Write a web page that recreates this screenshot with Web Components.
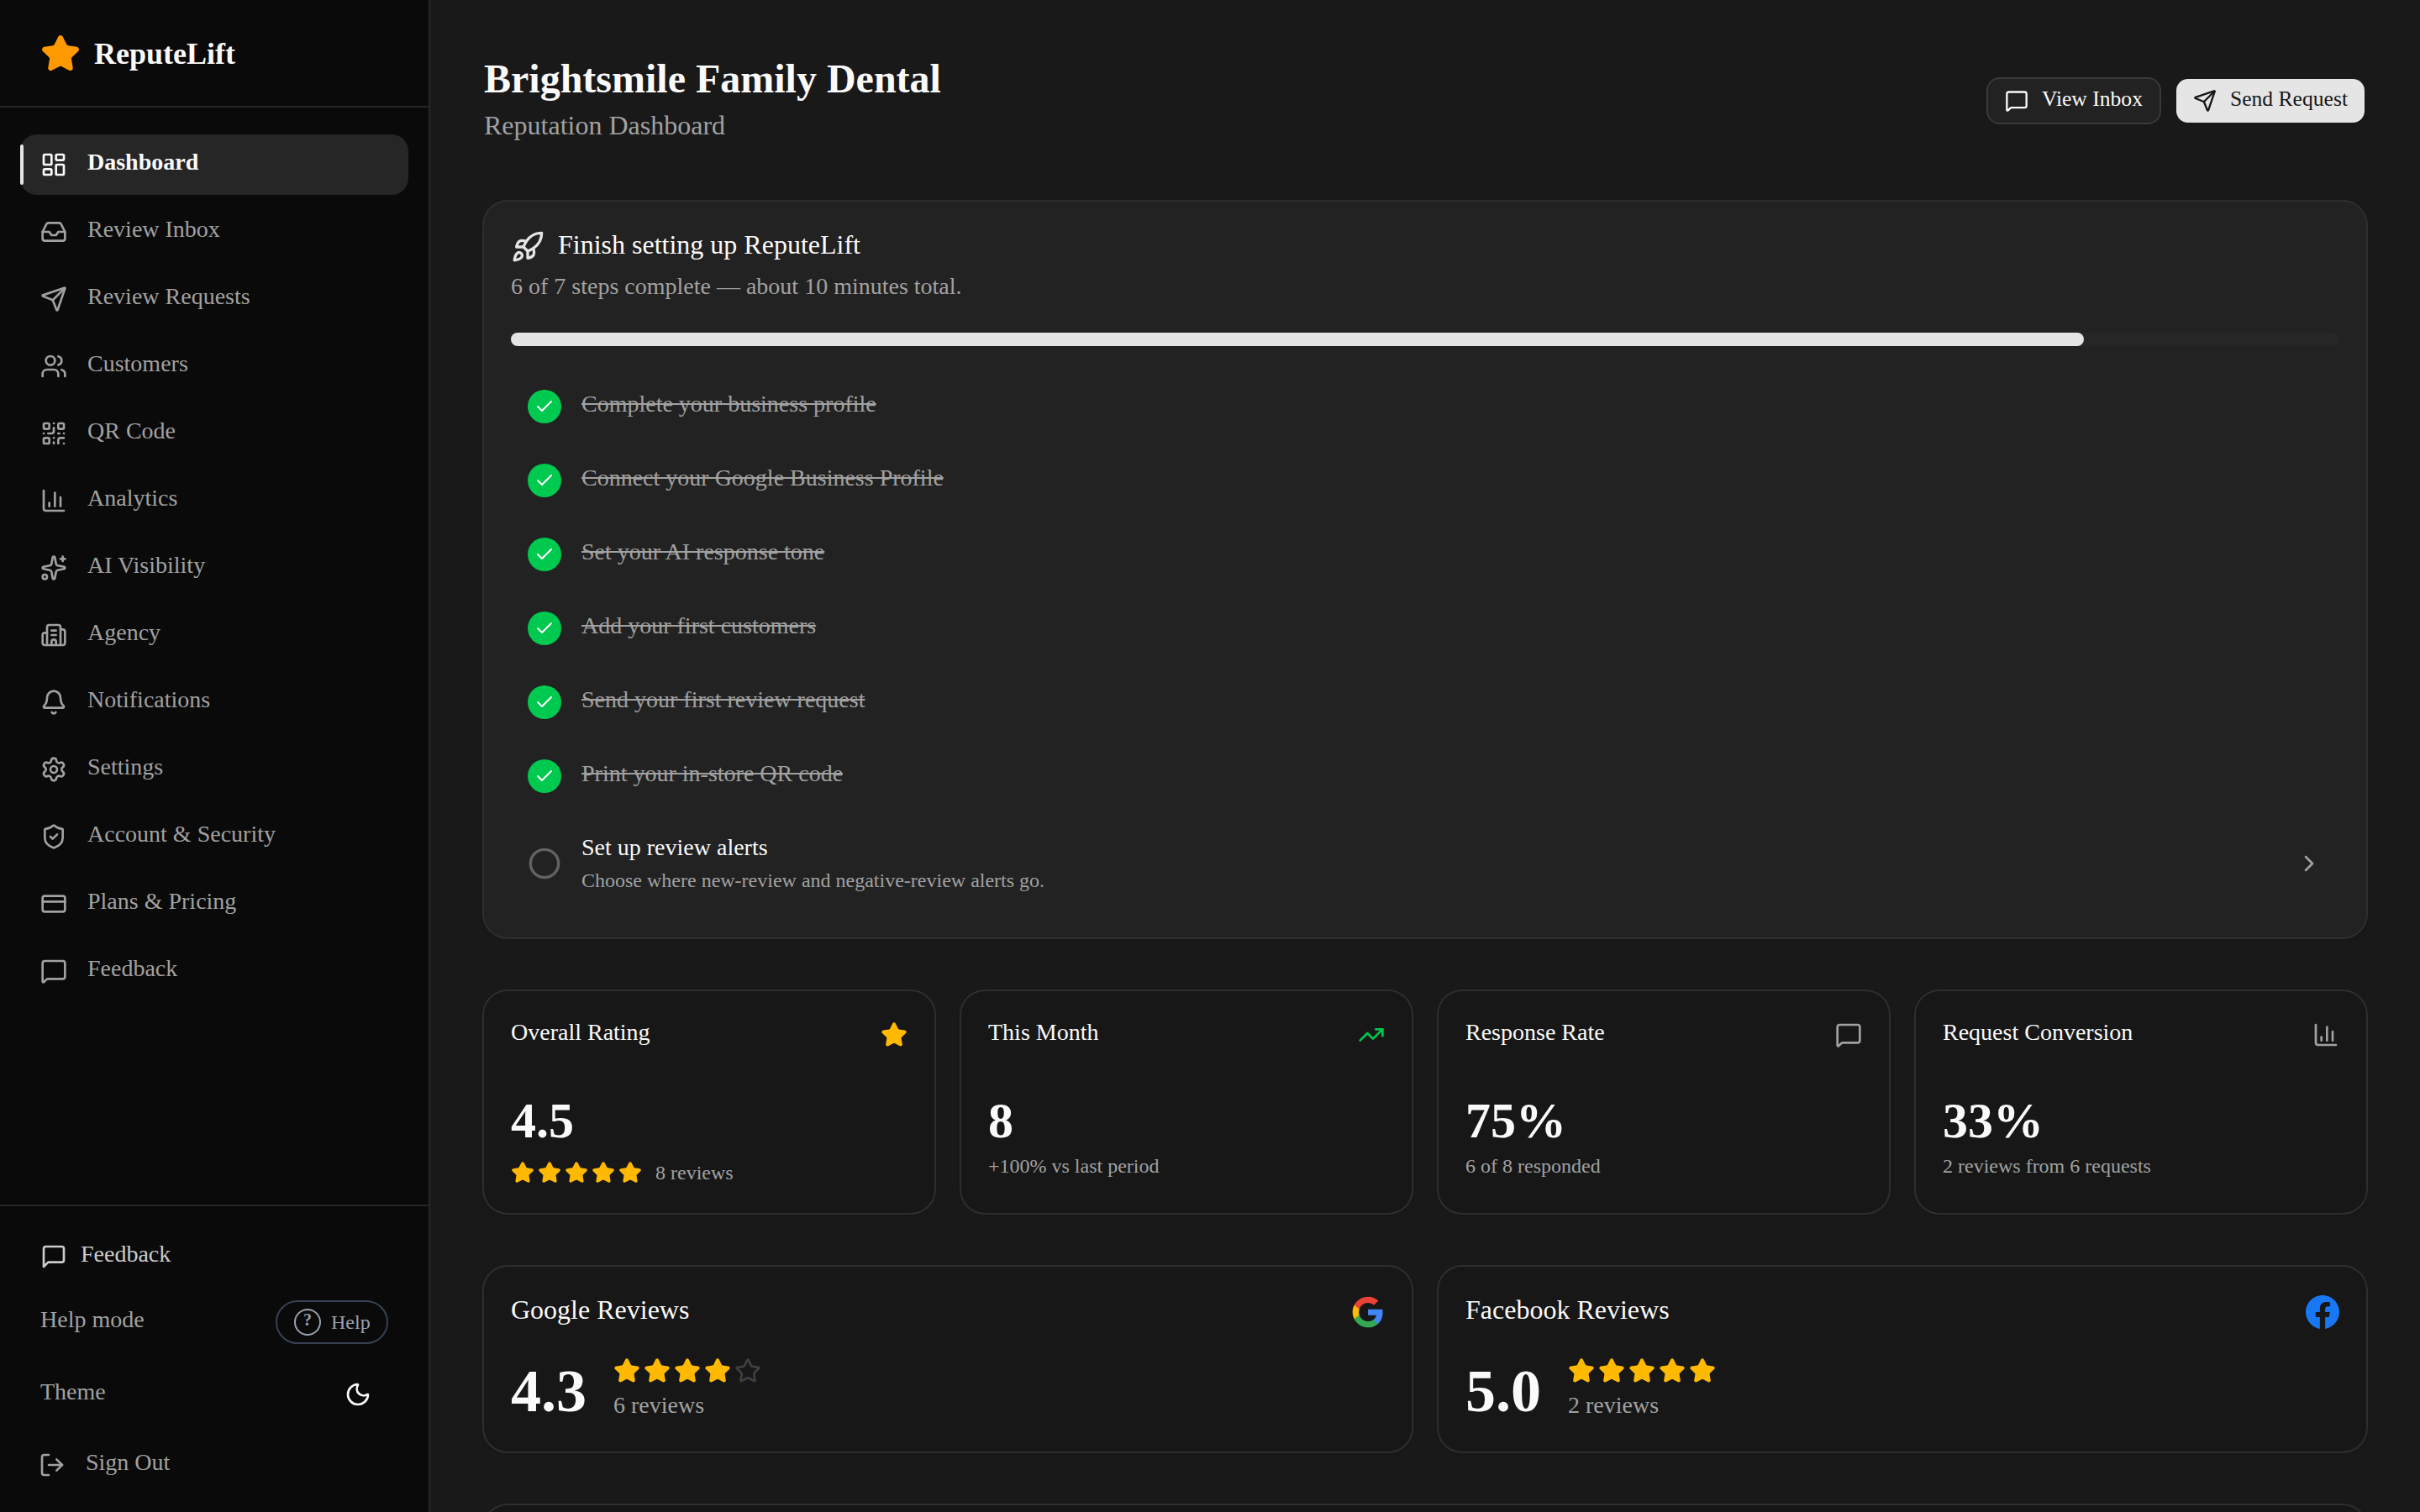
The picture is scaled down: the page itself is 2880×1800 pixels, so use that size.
<!DOCTYPE html>
<html lang="en">
<head>
<meta charset="utf-8">
<title>ReputeLift</title>
<style>
	:root {
		--page:    #191919;
		--sidebar: #0a0a0a;
		--card:    #171717;
		--raised:  #222222;
		--muted:   #262626;
		--line:    #2e2e2e;
		--text:    #fafafa;
		--dim:     #a1a1a1;
		--primary: #e5e5e5;
		--green:   #00c950;
		--amber:   #ffb900;
	}

	body {
		margin:      0;
		height:      1800px;
		overflow:    hidden;
		background:  var( --page );
		color:       var( --text );
		font-family: "Liberation Serif", "Times New Roman", serif;
		font-size:   28px;
	}
</style>
</head>
<body>

<rl-app>
	<rl-sidebar slot="sidebar">
		<rl-nav-item icon="dashboard" active>Dashboard</rl-nav-item>
		<rl-nav-item icon="inbox">Review Inbox</rl-nav-item>
		<rl-nav-item icon="send">Review Requests</rl-nav-item>
		<rl-nav-item icon="users">Customers</rl-nav-item>
		<rl-nav-item icon="qr">QR Code</rl-nav-item>
		<rl-nav-item icon="chart">Analytics</rl-nav-item>
		<rl-nav-item icon="sparkles">AI Visibility</rl-nav-item>
		<rl-nav-item icon="building">Agency</rl-nav-item>
		<rl-nav-item icon="bell">Notifications</rl-nav-item>
		<rl-nav-item icon="settings">Settings</rl-nav-item>
		<rl-nav-item icon="shield">Account &amp; Security</rl-nav-item>
		<rl-nav-item icon="card">Plans &amp; Pricing</rl-nav-item>
		<rl-nav-item icon="message">Feedback</rl-nav-item>
	</rl-sidebar>

	<rl-page-header>
		<span slot="title">Brightsmile Family Dental</span>
		<span slot="subtitle">Reputation Dashboard</span>
		<rl-button slot="actions" icon="message">View Inbox</rl-button>
		<rl-button slot="actions" icon="send" primary>Send Request</rl-button>
	</rl-page-header>

	<rl-setup-card progress="86.03">
		<span slot="title">Finish setting up ReputeLift</span>
		<span slot="subtitle">6 of 7 steps complete — about 10 minutes total.</span>
		<rl-step done>Complete your business profile</rl-step>
		<rl-step done>Connect your Google Business Profile</rl-step>
		<rl-step done>Set your AI response tone</rl-step>
		<rl-step done>Add your first customers</rl-step>
		<rl-step done>Send your first review request</rl-step>
		<rl-step done>Print your in-store QR code</rl-step>
		<rl-step hint="Choose where new-review and negative-review alerts go.">Set up review alerts</rl-step>
	</rl-setup-card>

	<rl-grid columns="4">
		<rl-stat label="Overall Rating" icon="star" tone="amber" value="4.5" rating="5">8 reviews</rl-stat>
		<rl-stat label="This Month" icon="trend" tone="green" value="8">+100% vs last period</rl-stat>
		<rl-stat label="Response Rate" icon="message" value="75%">6 of 8 responded</rl-stat>
		<rl-stat label="Request Conversion" icon="chart" value="33%">2 reviews from 6 requests</rl-stat>
	</rl-grid>

	<rl-grid columns="2">
		<rl-source label="Google Reviews" icon="google" value="4.3" rating="4">6 reviews</rl-source>
		<rl-source label="Facebook Reviews" icon="facebook" value="5.0" rating="5">2 reviews</rl-source>
	</rl-grid>

	<rl-panel></rl-panel>
</rl-app>

<script>
(function ()
{
	const STAR = '<path d="M11.525 2.295a.53.53 0 0 1 .95 0l2.31 4.679a2.123 2.123 0 0 0 1.595 1.16l5.166.756a.53.53 0 0 1 .294.904l-3.736 3.638a2.123 2.123 0 0 0-.611 1.878l.882 5.14a.53.53 0 0 1-.771.56l-4.618-2.428a2.122 2.122 0 0 0-1.973 0L6.396 21.01a.53.53 0 0 1-.77-.56l.881-5.139a2.122 2.122 0 0 0-.611-1.879L2.16 9.795a.53.53 0 0 1 .294-.906l5.165-.755a2.122 2.122 0 0 0 1.597-1.16z"/>';

	const ICONS =
	{
		dashboard: '<rect width="7" height="9" x="3" y="3" rx="1"/><rect width="7" height="5" x="14" y="3" rx="1"/><rect width="7" height="9" x="14" y="12" rx="1"/><rect width="7" height="5" x="3" y="16" rx="1"/>',
		inbox:     '<path d="M22 12h-6l-2 3h-4l-2-3H2"/><path d="M5.45 5.11 2 12v6a2 2 0 0 0 2 2h16a2 2 0 0 0 2-2v-6l-3.45-6.89A2 2 0 0 0 16.76 4H7.24a2 2 0 0 0-1.79 1.11z"/>',
		send:      '<path d="M14.536 21.686a.5.5 0 0 0 .937-.024l6.5-19a.496.496 0 0 0-.635-.635l-19 6.5a.5.5 0 0 0-.024.937l7.93 3.18a2 2 0 0 1 1.112 1.11z"/><path d="m21.854 2.147-10.94 10.939"/>',
		users:     '<path d="M16 21v-2a4 4 0 0 0-4-4H6a4 4 0 0 0-4 4v2"/><path d="M16 3.128a4 4 0 0 1 0 7.744"/><path d="M22 21v-2a4 4 0 0 0-3-3.87"/><circle cx="9" cy="7" r="4"/>',
		qr:        '<rect width="5" height="5" x="3" y="3" rx="1"/><rect width="5" height="5" x="16" y="3" rx="1"/><rect width="5" height="5" x="3" y="16" rx="1"/><path d="M21 16h-3a2 2 0 0 0-2 2v3"/><path d="M21 21v.01"/><path d="M12 7v3a2 2 0 0 1-2 2H7"/><path d="M3 12h.01"/><path d="M12 3h.01"/><path d="M12 16v.01"/><path d="M16 12h1"/><path d="M21 12v.01"/><path d="M12 21v-1"/>',
		chart:     '<path d="M3 3v16a2 2 0 0 0 2 2h16"/><path d="M18 17V9"/><path d="M13 17V5"/><path d="M8 17v-3"/>',
		sparkles:  '<path d="M11.017 2.814a1 1 0 0 1 1.966 0l1.051 5.558a2 2 0 0 0 1.594 1.594l5.558 1.051a1 1 0 0 1 0 1.966l-5.558 1.051a2 2 0 0 0-1.594 1.594l-1.051 5.558a1 1 0 0 1-1.966 0l-1.051-5.558a2 2 0 0 0-1.594-1.594l-5.558-1.051a1 1 0 0 1 0-1.966l5.558-1.051a2 2 0 0 0 1.594-1.594z"/><path d="M20 2v4"/><path d="M22 4h-4"/><circle cx="4" cy="20" r="2"/>',
		building:  '<path d="M10 12h4"/><path d="M10 8h4"/><path d="M14 21v-3a2 2 0 0 0-4 0v3"/><path d="M6 10H4a2 2 0 0 0-2 2v7a2 2 0 0 0 2 2h16a2 2 0 0 0 2-2V9a2 2 0 0 0-2-2h-2"/><path d="M6 21V5a2 2 0 0 1 2-2h8a2 2 0 0 1 2 2v16"/>',
		bell:      '<path d="M10.268 21a2 2 0 0 0 3.464 0"/><path d="M3.262 15.326A1 1 0 0 0 4 17h16a1 1 0 0 0 .74-1.673C19.41 13.956 18 12.499 18 8A6 6 0 0 0 6 8c0 4.499-1.411 5.956-2.738 7.326"/>',
		settings:  '<path d="M9.671 4.136a2.34 2.34 0 0 1 4.659 0 2.34 2.34 0 0 0 3.319 1.915 2.34 2.34 0 0 1 2.33 4.033 2.34 2.34 0 0 0 0 3.831 2.34 2.34 0 0 1-2.33 4.033 2.34 2.34 0 0 0-3.319 1.915 2.34 2.34 0 0 1-4.659 0 2.34 2.34 0 0 0-3.32-1.915 2.34 2.34 0 0 1-2.33-4.033 2.34 2.34 0 0 0 0-3.831A2.34 2.34 0 0 1 6.35 6.051a2.34 2.34 0 0 0 3.319-1.915"/><circle cx="12" cy="12" r="3"/>',
		shield:    '<path d="M20 13c0 5-3.5 7.5-7.66 8.95a1 1 0 0 1-.67-.01C7.5 20.5 4 18 4 13V6a1 1 0 0 1 1-1c2 0 4.5-1.2 6.24-2.72a1.17 1.17 0 0 1 1.52 0C14.51 3.81 17 5 19 5a1 1 0 0 1 1 1z"/><path d="m9 12 2 2 4-4"/>',
		card:      '<rect width="20" height="14" x="2" y="5" rx="2"/><path d="M2 10h20"/>',
		message:   '<path d="M22 17a2 2 0 0 1-2 2H6.828a2 2 0 0 0-1.414.586l-2.202 2.202A.71.71 0 0 1 2 21.286V5a2 2 0 0 1 2-2h16a2 2 0 0 1 2 2z"/>',
		feedback:  '<path d="M21 15a2 2 0 0 1-2 2H7l-4 4V5a2 2 0 0 1 2-2h14a2 2 0 0 1 2 2z"/>',
		moon:      '<path d="M20.985 12.486a9 9 0 1 1-9.473-9.472c.405-.022.617.46.402.803a6 6 0 0 0 8.268 8.268c.344-.215.825-.004.803.401"/>',
		logout:    '<path d="m16 17 5-5-5-5"/><path d="M21 12H9"/><path d="M9 21H5a2 2 0 0 1-2-2V5a2 2 0 0 1 2-2h4"/>',
		rocket:    '<path d="M4.5 16.5c-1.5 1.26-2 5-2 5s3.74-.5 5-2c.71-.84.7-2.13-.09-2.91a2.18 2.18 0 0 0-2.91-.09z"/><path d="m12 15-3-3a22 22 0 0 1 2-3.95A12.88 12.88 0 0 1 22 2c0 2.72-.78 7.5-6 11a22.35 22.35 0 0 1-4 2z"/><path d="M9 12H4s.55-3.03 2-4c1.62-1.08 5 0 5 0"/><path d="M12 15v5s3.03-.55 4-2c1.08-1.62 0-5 0-5"/>',
		check:     '<path d="M20 6 9 17l-5-5"/>',
		circle:    '<circle cx="12" cy="12" r="10"/>',
		chevron:   '<path d="m9 18 6-6-6-6"/>',
		trend:     '<path d="M16 7h6v6"/><path d="m22 7-8.5 8.5-5-5L2 17"/>',
		star:      `<g fill="currentColor">${ STAR }</g>`,
		starEmpty: STAR,
		google:    '<g stroke="none"><path fill="#4285F4" d="M22.56 12.25c0-.78-.07-1.53-.2-2.25H12v4.26h5.92c-.26 1.37-1.04 2.53-2.21 3.31v2.77h3.57c2.08-1.92 3.28-4.74 3.28-8.09z"/><path fill="#34A853" d="M12 23c2.97 0 5.46-.98 7.28-2.66l-3.57-2.77c-.98.66-2.23 1.06-3.71 1.06-2.86 0-5.29-1.93-6.16-4.53H2.18v2.84C3.99 20.53 7.7 23 12 23z"/><path fill="#FBBC05" d="M5.84 14.09c-.22-.66-.35-1.36-.35-2.09s.13-1.43.35-2.09V7.07H2.18C1.43 8.55 1 10.22 1 12s.43 3.45 1.18 4.93l2.85-2.22.81-.62z"/><path fill="#EA4335" d="M12 5.38c1.62 0 3.06.56 4.21 1.64l3.15-3.15C17.45 2.09 14.97 1 12 1 7.7 1 3.99 3.47 2.18 7.07l3.66 2.84c.87-2.6 3.3-4.53 6.16-4.53z"/></g>',
		facebook:  '<path stroke="none" fill="#1877F2" d="M24 12.073c0-6.627-5.373-12-12-12s-12 5.373-12 12c0 5.99 4.388 10.954 10.125 11.854v-8.385H7.078v-3.47h3.047V9.43c0-3.007 1.792-4.669 4.533-4.669 1.312 0 2.686.235 2.686.235v2.953H15.83c-1.491 0-1.956.925-1.956 1.874v2.25h3.328l-.532 3.47h-2.796v8.385C19.612 23.027 24 18.062 24 12.073z"/>',
	};

	// text sits a little above the middle of its line
	const TEXT =
	`
		.sm { font-size: 28px; line-height: 33px; padding-bottom: 7px; }
		.md { font-size: 32px; line-height: 38px; padding-bottom: 6px; }
		.xs { font-size: 24px; line-height: 32px; }
	`;

	const CARD =
	`
		:host {
			display:        flex;
			flex-direction: column;
			box-sizing:     border-box;
			padding:        32px;
			border-radius:  28px;
			background:     var( --card );
			box-shadow:     0 0 0 2px var( --line ), 0 2px 6px rgba( 0, 0, 0, 0.1 ), 0 2px 4px -2px rgba( 0, 0, 0, 0.1 );
		}
	`;

	class Base extends HTMLElement
	{
		constructor()
		{
			super();

			this.attachShadow({ mode: 'open' });
		}

		connectedCallback()
		{
			this.shadowRoot.innerHTML = `<style>${ this.styles() }</style>${ this.markup() }`;
		}

		attr( name )
		{
			return this.getAttribute( name );
		}
	}

	class Icon extends Base
	{
		styles()
		{
			const size = this.attr( 'size' ) || 32;

			return `
				:host { display: block; flex: none; width: ${ size }px; height: ${ size }px; }
				svg   { display: block; width: 100%; height: 100%; }
			`;
		}

		markup()
		{
			return `<svg viewBox="0 0 24 24" fill="none" stroke="currentColor" stroke-width="2" stroke-linecap="round" stroke-linejoin="round">${ ICONS[ this.attr( 'name' )] }</svg>`;
		}
	}

	class Stars extends Base
	{
		styles()
		{
			return `
				:host  { display: flex; gap: 4px; color: var( --amber ); }
				.empty { color: #404040; }
			`;
		}

		markup()
		{
			const size = this.attr( 'size' );
			let html = '';

			for ( let i = 0; i < 5; i++ )
			{
				html += i < this.attr( 'rating' )
					? `<rl-icon name="star" size="${ size }"></rl-icon>`
					: `<rl-icon class="empty" name="starEmpty" size="${ size }"></rl-icon>`;
			}

			return html;
		}
	}

	class App extends Base
	{
		styles()
		{
			return `
				:host { display: flex; height: 1800px; overflow: hidden; }
				main {
					flex:           1;
					display:        flex;
					flex-direction: column;
					gap:            64px;
					padding:        64px;
				}
				main ::slotted( * ) { flex: none; }
			`;
		}

		markup()
		{
			return `<slot name="sidebar"></slot><main><slot></slot></main>`;
		}
	}

	class Sidebar extends Base
	{
		styles()
		{
			return `
				${ TEXT }
				:host {
					display:        flex;
					flex-direction: column;
					flex:           none;
					box-sizing:     border-box;
					width:          512px;
					border-right:   2px solid #262626;
					background:     var( --sidebar );
					color:          var( --dim );
				}
				header {
					display:       flex;
					align-items:   center;
					gap:           16px;
					box-sizing:    border-box;
					height:        128px;
					padding:       2px 48px 0;
					border-bottom: 2px solid #262626;
				}
				header rl-icon { color: #fe9a00; }
				.brand {
					color:       var( --text );
					font-size:   36px;
					font-weight: 700;
					line-height: 40px;
				}
				nav {
					flex:           1;
					display:        flex;
					flex-direction: column;
					gap:            8px;
					padding:        32px 24px;
				}
				footer {
					box-sizing: border-box;
					height:     366px;
					padding:    24px 48px 0;
					border-top: 2px solid #262626;
				}
				.row {
					display:         flex;
					align-items:     center;
					justify-content: space-between;
					height:          72px;
				}
				.feedback { justify-content: flex-start; gap: 16px; color: #cccccc; }
				.help     { height: 52px; margin-top: 16px; }
				.theme    { margin-top: 24px; }
				.signout  { justify-content: flex-start; gap: 24px; margin: 12px 0 0 -2px; }
				.pill {
					display:       flex;
					align-items:   center;
					gap:           12px;
					box-sizing:    border-box;
					width:         134px;
					height:        52px;
					padding:       0 20px;
					border:        2px solid #364153;
					border-radius: 26px;
					color:         #99a1af;
				}
				.mark {
					display:         flex;
					align-items:     center;
					justify-content: center;
					flex:            none;
					box-sizing:      border-box;
					width:           32px;
					height:          32px;
					border:          2px solid currentColor;
					border-radius:   50%;
				}
				.mark span {
					font-size:      20px;
					font-weight:    700;
					line-height:    22px;
					padding-bottom: 6px;
				}
				.toggle {
					display:         flex;
					align-items:     center;
					justify-content: center;
					width:           72px;
					height:          72px;
					color:           var( --text );
				}
			`;
		}

		markup()
		{
			return `
				<header><rl-icon name="star" size="48"></rl-icon><span class="brand">ReputeLift</span></header>
				<nav><slot></slot></nav>
				<footer>
					<div class="row feedback"><rl-icon name="feedback"></rl-icon><span class="sm">Feedback</span></div>
					<div class="row help">
						<span class="sm">Help mode</span>
						<div class="pill"><div class="mark"><span>?</span></div><div class="xs">Help</div></div>
					</div>
					<div class="row theme">
						<span class="sm">Theme</span>
						<div class="toggle"><rl-icon name="moon"></rl-icon></div>
					</div>
					<div class="row signout"><rl-icon name="logout"></rl-icon><span class="sm">Sign Out</span></div>
				</footer>
			`;
		}
	}

	class NavItem extends Base
	{
		styles()
		{
			return `
				${ TEXT }
				:host {
					position:      relative;
					display:       flex;
					align-items:   center;
					gap:           24px;
					height:        72px;
					padding:       0 24px;
					border-radius: 20px;
				}
				:host( [active] ) {
					background:  var( --muted );
					color:       var( --text );
					font-weight: 700;
				}
				:host( [active] )::before {
					content:       "";
					position:      absolute;
					left:          0;
					top:           12px;
					width:         4px;
					height:        48px;
					border-radius: 2px;
					background:    var( --primary );
				}
			`;
		}

		markup()
		{
			return `<rl-icon name="${ this.attr( 'icon' ) }"></rl-icon><span class="sm"><slot></slot></span>`;
		}
	}

	class PageHeader extends Base
	{
		styles()
		{
			return `
				:host {
					display:         flex;
					align-items:     center;
					justify-content: space-between;
					height:          112px;
				}
				.text     { align-self: flex-start; }
				h1        { margin: 0; font-size: 48px; line-height: 59px; }
				p         { margin: 0; font-size: 32px; line-height: 52px; color: var( --dim ); }
				.actions  { display: flex; gap: 16px; }
			`;
		}

		markup()
		{
			return `
				<div class="text">
					<h1><slot name="title"></slot></h1>
					<p><slot name="subtitle"></slot></p>
				</div>
				<div class="actions"><slot name="actions"></slot></div>
			`;
		}
	}

	class Button extends Base
	{
		styles()
		{
			return `
				:host {
					display:         flex;
					align-items:     center;
					gap:             16px;
					box-sizing:      border-box;
					height:          56px;
					padding:         0 20px;
					border:          2px solid #3a3a3a;
					border-radius:   16px;
					background:      var( --raised );
					background-clip: padding-box;
				}
				:host( [primary] ) {
					border-color:     transparent;
					background-color: var( --primary );
					color:            #171717;
				}
				span { font-size: 25.6px; line-height: 31px; padding-bottom: 5px; }
			`;
		}

		markup()
		{
			return `<rl-icon name="${ this.attr( 'icon' ) }" size="28"></rl-icon><span><slot></slot></span>`;
		}
	}

	class SetupCard extends Base
	{
		styles()
		{
			return `
				${ CARD }
				${ TEXT }
				:host         { background: var( --raised ); }
				.head         { display: flex; align-items: center; gap: 16px; }
				.head rl-icon { color: var( --primary ); }
				.sub          { margin-top: 8px; color: var( --dim ); }
				.track {
					height:        16px;
					margin:        32px 0;
					border-radius: 8px;
					background:    var( --muted );
				}
				.fill {
					width:         ${ this.attr( 'progress' ) }%;
					height:        100%;
					border-radius: 8px;
					background:    var( --primary );
				}
				.steps { display: flex; flex-direction: column; gap: 8px; }
			`;
		}

		markup()
		{
			return `
				<div class="head"><rl-icon name="rocket" size="40"></rl-icon><span class="md"><slot name="title"></slot></span></div>
				<div class="sub sm"><slot name="subtitle"></slot></div>
				<div class="track"><div class="fill"></div></div>
				<div class="steps"><slot></slot></div>
			`;
		}
	}

	class Step extends Base
	{
		styles()
		{
			return `
				${ TEXT }
				:host {
					display:     flex;
					align-items: center;
					gap:         24px;
					height:      112px;
					padding:     0 20px;
				}
				:host( [done] ) { height: 80px; color: var( --dim ); }
				.badge {
					display:         flex;
					align-items:     center;
					justify-content: center;
					width:           40px;
					height:          40px;
					border-radius:   50%;
					background:      var( --green );
					color:           #ffffff;
				}
				.done    { text-decoration: line-through; }
				.open    { color: #626262; }
				.body    { flex: 1; }
				.name    { line-height: 33px; }
				.hint    { margin-top: 7px; color: var( --dim ); }
				.chevron { color: var( --dim ); }
			`;
		}

		markup()
		{
			if ( this.hasAttribute( 'done' ))
			{
				return `
					<div class="badge"><rl-icon name="check" size="24"></rl-icon></div>
					<span class="sm done"><slot></slot></span>
				`;
			}

			return `
				<rl-icon class="open" name="circle" size="40"></rl-icon>
				<div class="body">
					<div class="name"><slot></slot></div>
					<div class="hint xs">${ this.attr( 'hint' ) }</div>
				</div>
				<rl-icon class="chevron" name="chevron"></rl-icon>
			`;
		}
	}

	class Grid extends Base
	{
		styles()
		{
			return `
				:host {
					display:               grid;
					grid-template-columns: repeat( ${ this.attr( 'columns' ) }, 1fr );
					gap:                   32px;
				}
			`;
		}

		markup()
		{
			return `<slot></slot>`;
		}
	}

	class Stat extends Base
	{
		styles()
		{
			return `
				${ CARD }
				${ TEXT }
				:host { height: 264px; }
				.head {
					display:         flex;
					align-items:     center;
					justify-content: space-between;
					margin-bottom:   48px;
				}
				.head rl-icon { color: var( --${ this.attr( 'tone' ) || 'dim' } ); }
				.value {
					font-size:      60px;
					font-weight:    700;
					line-height:    68px;
					padding-bottom: 4px;
				}
				.foot       { display: flex; align-items: center; gap: 16px; color: var( --dim ); }
				.foot.rated { margin-top: 8px; }
			`;
		}

		markup()
		{
			const rating = this.attr( 'rating' );

			return `
				<div class="head"><span class="sm">${ this.attr( 'label' ) }</span><rl-icon name="${ this.attr( 'icon' ) }"></rl-icon></div>
				<div class="value">${ this.attr( 'value' ) }</div>
				<div class="foot xs ${ rating ? 'rated' : '' }">
					${ rating ? `<rl-stars rating="${ rating }" size="28"></rl-stars>` : '' }
					<span><slot></slot></span>
				</div>
			`;
		}
	}

	class Source extends Base
	{
		styles()
		{
			return `
				${ CARD }
				${ TEXT }
				:host { height: 220px; }
				.head {
					display:         flex;
					align-items:     center;
					justify-content: space-between;
					margin-bottom:   32px;
				}
				.body  { display: flex; gap: 32px; }
				.value { font-size: 72px; font-weight: 700; line-height: 80px; }
				.count { margin-top: 8px; color: var( --dim ); }
			`;
		}

		markup()
		{
			return `
				<div class="head"><span class="md">${ this.attr( 'label' ) }</span><rl-icon name="${ this.attr( 'icon' ) }" size="40"></rl-icon></div>
				<div class="body">
					<div class="value">${ this.attr( 'value' ) }</div>
					<div>
						<rl-stars rating="${ this.attr( 'rating' ) }" size="32"></rl-stars>
						<div class="count sm"><slot></slot></div>
					</div>
				</div>
			`;
		}
	}

	// starts just above the fold
	class Panel extends Base
	{
		styles()
		{
			return `
				${ CARD }
				:host { height: 400px; }
			`;
		}

		markup()
		{
			return `<slot></slot>`;
		}
	}

	customElements.define( 'rl-icon', Icon );
	customElements.define( 'rl-stars', Stars );
	customElements.define( 'rl-app', App );
	customElements.define( 'rl-sidebar', Sidebar );
	customElements.define( 'rl-nav-item', NavItem );
	customElements.define( 'rl-page-header', PageHeader );
	customElements.define( 'rl-button', Button );
	customElements.define( 'rl-setup-card', SetupCard );
	customElements.define( 'rl-step', Step );
	customElements.define( 'rl-grid', Grid );
	customElements.define( 'rl-stat', Stat );
	customElements.define( 'rl-source', Source );
	customElements.define( 'rl-panel', Panel );
})();
</script>
</body>
</html>
